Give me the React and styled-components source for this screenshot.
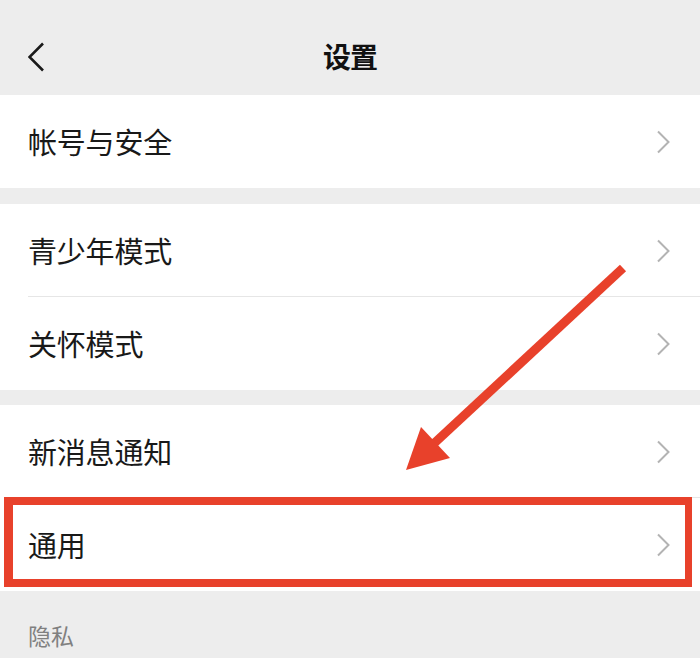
import styled, { createGlobalStyle } from "styled-components";

const GlobalStyle = createGlobalStyle`
	html, body {
		margin: 0;
		padding: 0;
		background: #ededed;
	}
	* {
		box-sizing: border-box;
	}
`;

const Page = styled.div`
	position: relative;
	width: 700px;
	height: 658px;
	overflow: hidden;
	background: #ededed;
	font-family: "Noto Sans CJK SC", "Noto Sans", sans-serif;
	color: #191919;
`;

const Header = styled.header`
	display: grid;
	grid-template-columns: 1fr auto 1fr;
	align-items: center;
	height: 95px;
	padding: 17px 28px 0;
`;

const Title = styled.h1`
	margin: 0;
	font-size: 28px;
	font-weight: 600;
	line-height: 1;
	letter-spacing: -1px;
	color: #111;
`;

const BackIcon = styled.svg`
	display: block;
	width: 16px;
	height: 30px;
	margin-top: 1px;
`;

const Group = styled.section`
	background: #fff;
	margin-top: ${({ gap }) => gap}px;
`;

const Row = styled.div`
	position: relative;
	display: flex;
	align-items: center;
	justify-content: space-between;
	height: 93px;
	padding: 0 30px 0 28px;
	&:not(:last-child)::after {
		content: "";
		position: absolute;
		left: 28px;
		right: 0;
		bottom: 0;
		height: 1px;
		background: #e6e6e6;
	}
`;

const Label = styled.span`
	font-size: 29px;
	line-height: 1;
	letter-spacing: -0.2px;
`;

const Chevron = styled.svg`
	display: block;
	width: 14px;
	height: 24px;
`;

const Highlight = styled.div`
	position: absolute;
	left: 4px;
	right: 8px;
	top: -1px;
	bottom: 4px;
	border-style: solid;
	border-color: #e8412b;
	border-width: 8px 7px 8px 9px;
	pointer-events: none;
`;

const SectionTitle = styled.div`
	padding: 33px 28px 0;
	font-size: 23px;
	line-height: 1;
	color: #808080;
`;

const ArrowLayer = styled.svg`
	position: absolute;
	left: 0;
	top: 0;
	width: 700px;
	height: 658px;
	pointer-events: none;
`;

const groups = [
	{ gap: 0, items: ["帐号与安全"] },
	{ gap: 16, items: ["青少年模式", "关怀模式"] },
	{ gap: 15, items: ["新消息通知", "通用"] },
];

const SettingRow = ({ label, marked }) => (
	<Row>
		<Label>{label}</Label>
		<Chevron viewBox="0 0 14 24">
			<polyline
				points="2,1.5 12.5,12 2,22.5"
				fill="none"
				stroke="#b3b3b3"
				strokeWidth="2"
			/>
		</Chevron>
		{marked && <Highlight />}
	</Row>
);

export default function App() {
	return (
		<Page>
			<GlobalStyle />
			<Header>
				<BackIcon viewBox="0 0 16 30">
					<polyline
						points="15,1.5 1.5,15 15,28.5"
						fill="none"
						stroke="#1a1a1a"
						strokeWidth="2.6"
					/>
				</BackIcon>
				<Title>设置</Title>
				<span />
			</Header>
			{groups.map((g, i) => (
				<Group key={i} gap={g.gap}>
					{g.items.map((label) => (
						<SettingRow key={label} label={label} marked={label === "通用"} />
					))}
				</Group>
			))}
			<SectionTitle>隐私</SectionTitle>
			<ArrowLayer viewBox="0 0 700 658">
				<line
					x1="623"
					y1="268"
					x2="428"
					y2="449"
					stroke="#e8412b"
					strokeWidth="9"
				/>
				<polygon points="406,470 421,427 450,458" fill="#e8412b" />
			</ArrowLayer>
		</Page>
	);
}
